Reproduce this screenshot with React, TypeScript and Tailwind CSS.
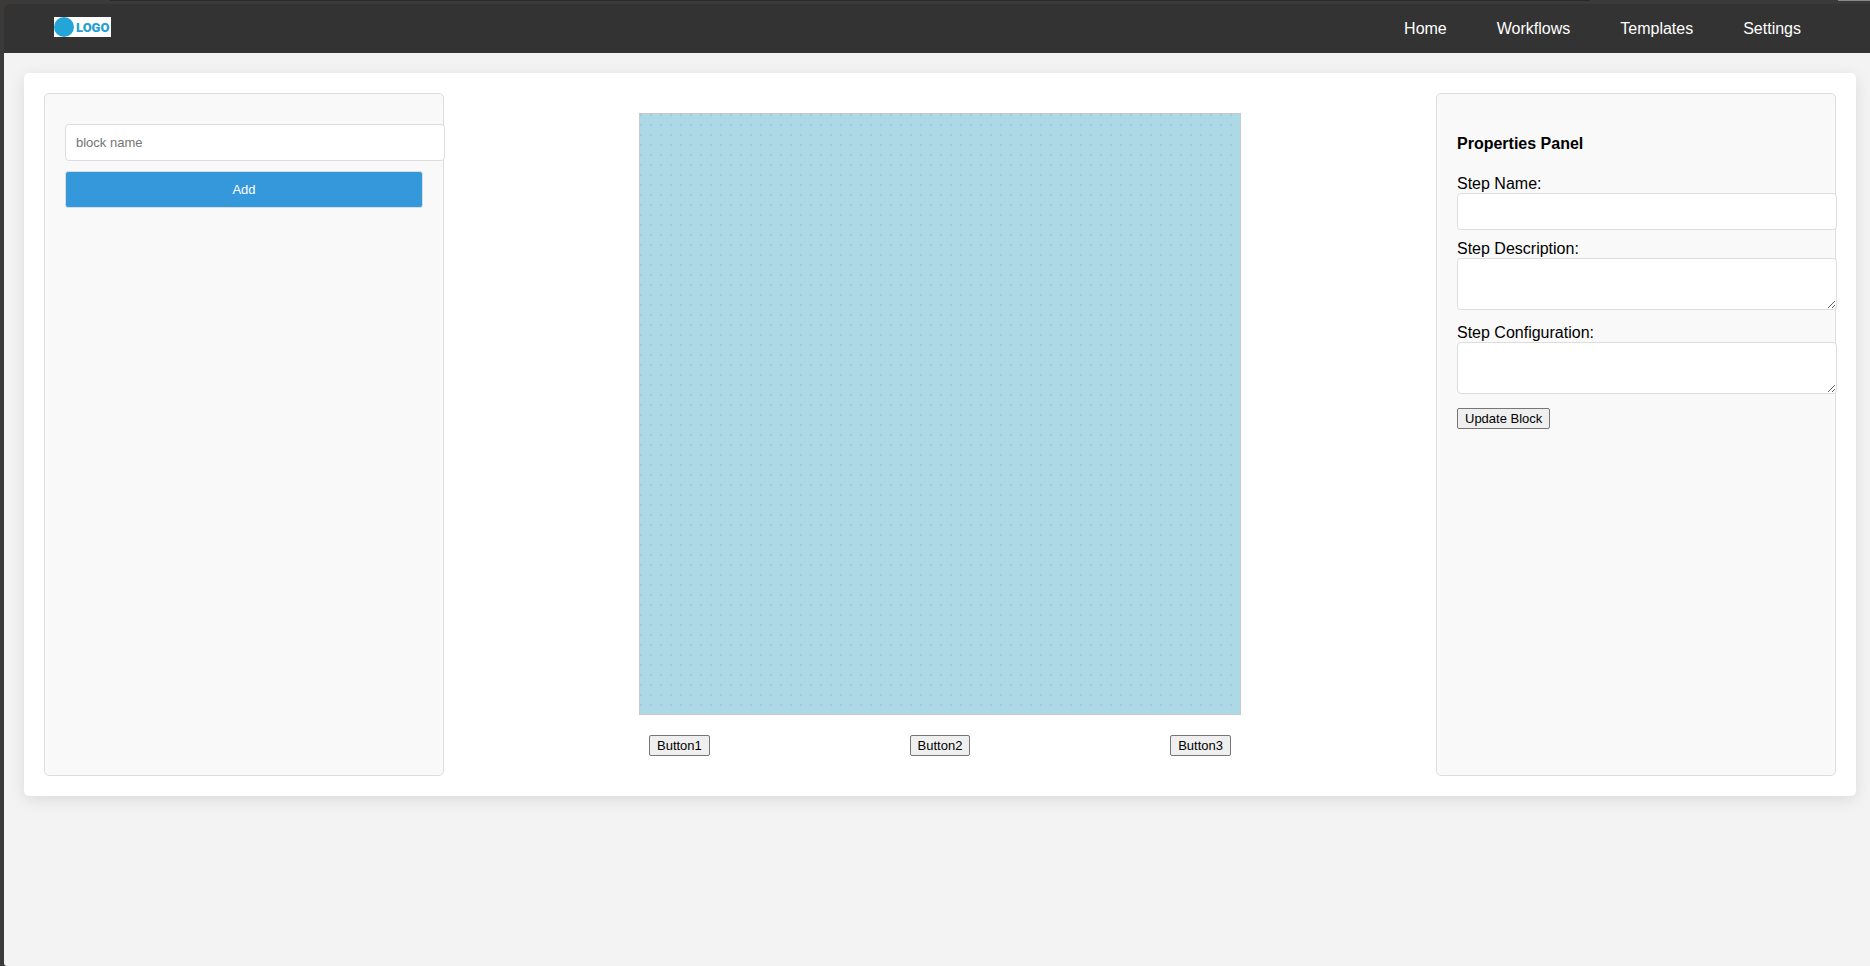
import React from "react";

const navItems = ["Home", "Workflows", "Templates", "Settings"];
const actions = ["Button1", "Button2", "Button3"];

const fieldClass =
  "block w-[calc(100%+22px)] rounded border border-[#dddddd] bg-white p-[10px] text-[13px] leading-[15px] text-black outline-none placeholder:text-[#757575]";
const plainButtonClass =
  "rounded-[2px] border border-[#767676] bg-[#efefef] px-[7px] py-px text-[13px] leading-[17px] text-black";
const panelClass =
  "w-[400px] shrink-0 rounded-[5px] border border-[#dddddd] bg-[#f9f9f9] px-5 pb-5";

function Logo() {
  return (
    <svg width="57" height="20" viewBox="0 0 57 20" role="img" aria-label="Logo">
      <rect width="57" height="20" fill="#ffffff" />
      <circle cx="10" cy="10" r="10" fill="#24a5d8" />
      <text
        x="22"
        y="15"
        fill="#24a0d2"
        fontFamily="Roboto, sans-serif"
        fontSize="13"
        fontWeight="900"
      >
        LOGO
      </text>
    </svg>
  );
}

function Header() {
  return (
    <header className="flex h-[49px] items-center justify-between rounded-tl-md bg-[#333333] pr-11 pl-[50px]">
      <a href="#" className="mb-1 block">
        <Logo />
      </a>
      <nav className="flex">
        {navItems.map((item) => (
          <a key={item} href="#" className="px-[25px] text-base leading-[18px] text-white">
            {item}
          </a>
        ))}
      </nav>
    </header>
  );
}

function BlockPanel() {
  return (
    <section className={`${panelClass} pt-[30px]`}>
      <input type="text" aria-label="block name" placeholder="block name" className={fieldClass} />
      <button
        type="button"
        className="mt-[10px] w-full rounded-[3px] border border-[#dddddd] bg-[#3498db] p-[10px] text-[13px] leading-[15px] text-white"
      >
        Add
      </button>
    </section>
  );
}

function Workspace() {
  return (
    <section className="flex min-w-0 flex-1 flex-col items-center pt-5">
      <div className="h-[602px] w-[602px] border border-[#c4ccd0] bg-[#add8e6] bg-[radial-gradient(circle_at_1px_1px,#a4ccda_1px,transparent_1px)] bg-size-[10px_10px]" />
      <div className="mt-5 flex w-[582px] justify-between">
        {actions.map((label) => (
          <button key={label} type="button" className={plainButtonClass}>
            {label}
          </button>
        ))}
      </div>
    </section>
  );
}

function PropertiesPanel() {
  return (
    <section className={`${panelClass} pt-[41px]`}>
      <h4 className="text-base leading-[18px] font-bold">Properties Panel</h4>
      <form className="mt-[22px] text-base leading-[18px]">
        <label htmlFor="step-name" className="block">Step Name:</label>
        <input id="step-name" type="text" className={fieldClass} />
        <label htmlFor="step-description" className="mt-[10px] block">Step Description:</label>
        <textarea id="step-description" className={`${fieldClass} h-[52px] resize`} />
        <label htmlFor="step-configuration" className="mt-[14px] block">Step Configuration:</label>
        <textarea id="step-configuration" className={`${fieldClass} h-[52px] resize`} />
        <button type="button" className={`mt-[14px] ${plainButtonClass}`}>
          Update Block
        </button>
      </form>
    </section>
  );
}

export default function App() {
  return (
    <div className="flex min-h-screen flex-col bg-[#3b3a39] font-['Liberation_Sans',Arial,sans-serif] text-black">
      <div className="flex h-1 items-start pl-[110px]">
        <div className="h-px flex-1 bg-[#2a2a2a]" />
        <div className="h-px w-[248px]" />
        <div className="h-px w-8 bg-[#8a8a8a]" />
      </div>
      <div className="ml-1 flex-1 rounded-tl-md rounded-bl-[3px] bg-[#333333]">
        <Header />
        <div className="flex min-h-[calc(100vh-53px)] flex-col rounded-bl-[3px] bg-[#f3f3f3] pt-5 pr-[14px] pl-5">
          <main className="flex min-h-[723px] rounded-[5px] bg-white p-5 shadow-[0_4px_16px_rgba(0,0,0,0.1)]">
            <BlockPanel />
            <Workspace />
            <PropertiesPanel />
          </main>
        </div>
      </div>
    </div>
  );
}
